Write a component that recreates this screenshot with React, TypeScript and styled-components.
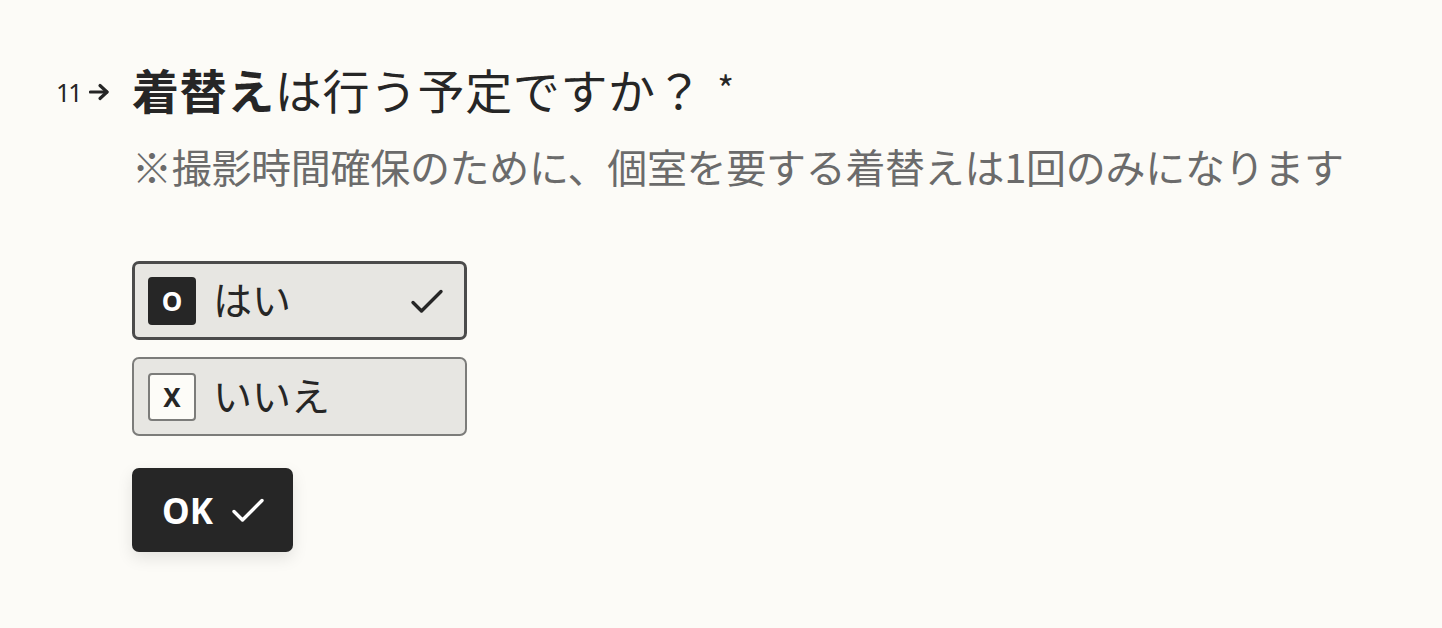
import React from "react";
import styled, { createGlobalStyle } from "styled-components";

const GlobalStyle = createGlobalStyle`
  html, body {
    margin: 0;
    padding: 0;
    background: #fcfbf7;
  }
  body {
    font-family: "Noto Sans CJK JP", "Noto Sans", sans-serif;
    color: #262626;
  }
`;

const Page = styled.main`
  min-height: 628px;
  box-sizing: border-box;
  padding: 51px 0 0 56px;
  background: #fcfbf7;
`;

const QuestionGrid = styled.section`
  display: grid;
  grid-template-columns: 76px 1fr;
`;

const Counter = styled.div`
  display: flex;
  align-items: center;
  gap: 8px;
  height: 82px;
  font-family: "Noto Sans", sans-serif;
  font-size: 25px;
  letter-spacing: -2px;
  color: #262626;
`;

const Body = styled.div`
  display: flex;
  flex-direction: column;
`;

const Title = styled.h1`
  margin: 0;
  font-size: 47px;
  line-height: 72px;
  font-weight: 400;
  color: #262626;
  letter-spacing: 0.6px;
`;

const Strong = styled.span`
  font-weight: 700;
`;

const Required = styled.span`
  margin-left: 14px;
  font-size: 36px;
  vertical-align: 6px;
`;

const Subtitle = styled.p`
  margin: 13px 0 0;
  font-size: 40px;
  line-height: 56px;
  color: #6b6b6b;
  letter-spacing: -0.3px;
`;

const Options = styled.div`
  display: flex;
  flex-direction: column;
  gap: 17px;
  margin-top: 67px;
  width: 335px;
`;

const Option = styled.div<{ $selected?: boolean }>`
  box-sizing: border-box;
  height: 79px;
  display: flex;
  align-items: center;
  gap: 17px;
  padding: 0 ${(p) => (p.$selected ? 20 : 22)}px 0 ${(p) => (p.$selected ? 13 : 14)}px;
  background: #e7e6e2;
  border: ${(p) => (p.$selected ? "3px solid #4b4b4b" : "2px solid #7c7c7a")};
  border-radius: 7px;
`;

const Key = styled.span<{ $selected?: boolean }>`
  box-sizing: border-box;
  width: 48px;
  height: 48px;
  flex: none;
  display: flex;
  align-items: center;
  justify-content: center;
  border-radius: 4px;
  font-family: "Noto Sans", sans-serif;
  font-weight: 700;
  font-size: 26px;
  background: ${(p) => (p.$selected ? "#262626" : "#fdfcf8")};
  color: ${(p) => (p.$selected ? "#ffffff" : "#262626")};
  border: ${(p) => (p.$selected ? "none" : "2px solid #7c7c7a")};
`;

const Label = styled.span`
  flex: 1;
  font-size: 39px;
  line-height: 48px;
  color: #262626;
  padding-bottom: 6px;
`;

const CheckSvg = styled.svg`
  width: 34px;
  height: 34px;
  flex: none;
`;

const OkButton = styled.button`
  margin-top: 32px;
  align-self: flex-start;
  width: 161px;
  height: 84px;
  display: flex;
  align-items: center;
  justify-content: center;
  gap: 18px;
  border: none;
  border-radius: 7px;
  background: #262626;
  color: #ffffff;
  font-family: "Noto Sans", sans-serif;
  font-weight: 700;
  font-size: 35px;
  padding: 0 0 0 2px;
  box-shadow: 0 6px 16px rgba(0, 0, 0, 0.1);
  cursor: pointer;
`;

const Check = ({ color = "#262626" }: { color?: string }) => (
  <CheckSvg viewBox="0 0 34 34" fill="none">
    <path
      d="M3 18.5 L11.5 27 L31 7.5"
      stroke={color}
      strokeWidth="3.4"
      strokeLinecap="round"
      strokeLinejoin="round"
    />
  </CheckSvg>
);

const Arrow = () => (
  <svg width="21" height="18" viewBox="0 0 21 18" fill="none">
    <path d="M1.5 9 H18" stroke="#262626" strokeWidth="3.2" strokeLinecap="round" />
    <path
      d="M11 2.5 L18 9 L11 15.5"
      stroke="#262626"
      strokeWidth="3.2"
      strokeLinecap="round"
      strokeLinejoin="round"
    />
  </svg>
);

export default function App() {
  return (
    <>
      <GlobalStyle />
      <Page>
        <QuestionGrid>
          <Counter>
            <span>11</span>
            <Arrow />
          </Counter>
          <Body>
            <Title>
              <Strong>着替え</Strong>は行う予定ですか？
              <Required>*</Required>
            </Title>
            <Subtitle>※撮影時間確保のために、個室を要する着替えは1回のみになります</Subtitle>
            <Options>
              <Option $selected>
                <Key $selected>O</Key>
                <Label>はい</Label>
                <Check />
              </Option>
              <Option>
                <Key>X</Key>
                <Label>いいえ</Label>
              </Option>
            </Options>
            <OkButton>
              OK
              <Check color="#ffffff" />
            </OkButton>
          </Body>
        </QuestionGrid>
      </Page>
    </>
  );
}
